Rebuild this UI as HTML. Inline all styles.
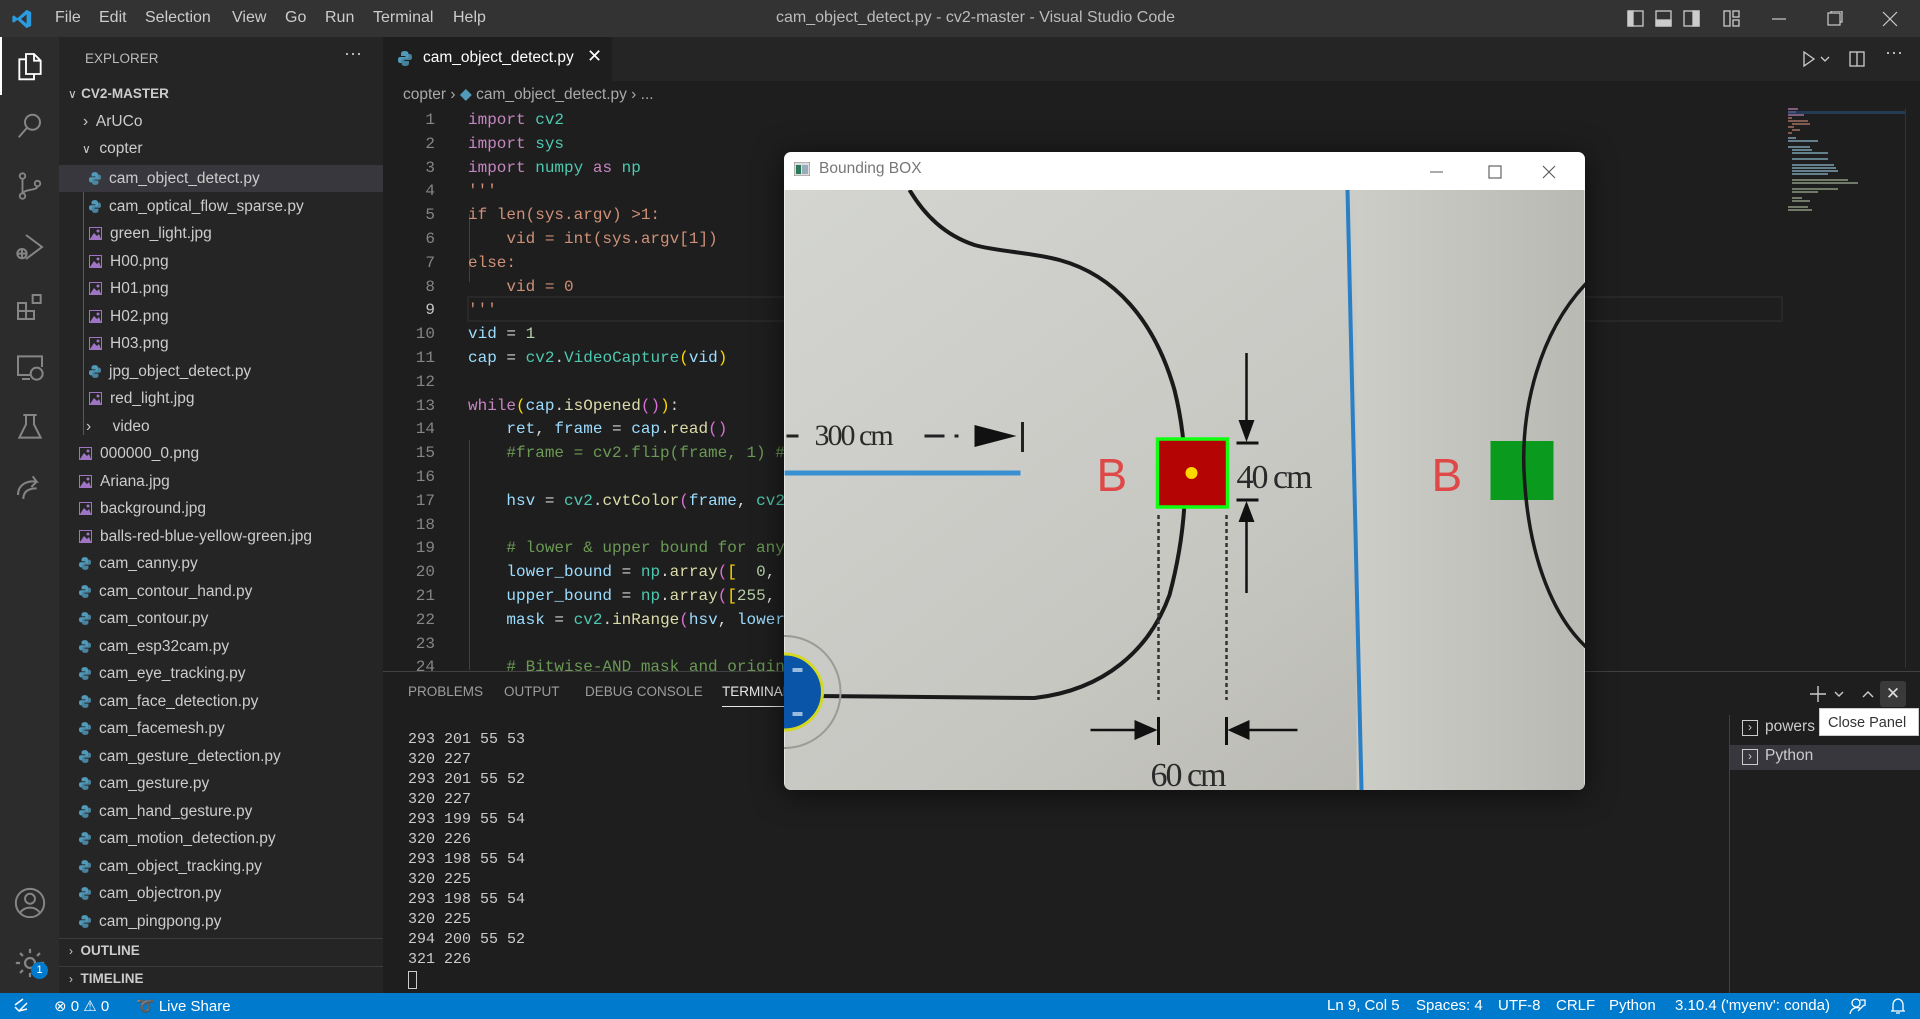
<!DOCTYPE html>
<html><head><meta charset="utf-8">
<style>
*{margin:0;padding:0;box-sizing:border-box}
body{width:1920px;height:1019px;overflow:hidden;background:#1e1e1e;font-family:"Liberation Sans",sans-serif;position:relative;color:#ccc}
.abs{position:absolute}
#title{left:0;top:0;width:1920px;height:37px;background:#333333}
.menu{top:9px;font-size:16px;color:#cccccc}
#act{left:0;top:37px;width:59px;height:956px;background:#2c2c2c}
#side{left:59px;top:37px;width:324px;height:956px;background:#252526}
.row{position:absolute;left:0;width:324px;height:27px;font-size:15.5px;color:#cccccc;line-height:27px;white-space:nowrap}
.ic{display:inline-block;vertical-align:middle;margin-right:8px}
#tabs{left:383px;top:37px;width:1537px;height:44px;background:#252526}
.code{position:absolute;font-family:"Liberation Mono",monospace;font-size:16px;white-space:pre;line-height:24px;height:24px}
.ln{position:absolute;width:50px;text-align:right;font-family:"Liberation Mono",monospace;font-size:16px;color:#858585;line-height:24px;left:385px}
.k{color:#c586c0}.t{color:#4ec9b0}.s{color:#ce9178}.v{color:#9cdcfe}.f{color:#dcdcaa}.n{color:#b5cea8}.c{color:#6a9955}.p{color:#d4d4d4}.y{color:#ffd700}.pk{color:#da70d6}
.term{position:absolute;left:408px;font-family:"Liberation Mono",monospace;font-size:15px;color:#cccccc;line-height:20px;white-space:pre}
.ptab{top:684px;font-size:13.5px;color:#9d9d9d}
#status{left:0;top:993px;width:1920px;height:26px;background:#007acc;color:#fff;font-size:15px}
.st{top:4px;color:#fff;font-size:15px;white-space:nowrap}
</style></head><body>

<div id="title" class="abs">
<svg class="abs" style="left:11px;top:8px" width="22" height="22" viewBox="0 0 24 24"><path d="M17 2 L22 4.5 V19.5 L17 22 L7 13 L3 16 L1.5 15 V9 L3 8 L7 11 Z M17 7 L11 12 L17 17 Z" fill="#2b9be0"/></svg>
<span class="abs menu" style="left:55px">File</span>
<span class="abs menu" style="left:99px">Edit</span>
<span class="abs menu" style="left:145px">Selection</span>
<span class="abs menu" style="left:232px">View</span>
<span class="abs menu" style="left:285px">Go</span>
<span class="abs menu" style="left:325px">Run</span>
<span class="abs menu" style="left:373px">Terminal</span>
<span class="abs menu" style="left:453px">Help</span>
<span class="abs menu" style="left:776px;color:#bbb">cam_object_detect.py - cv2-master - Visual Studio Code</span>
<svg class="abs" style="left:1627px;top:10px" width="118" height="18" viewBox="0 0 118 18" fill="none" stroke="#ccc" stroke-width="1.3">
<rect x="1" y="1" width="15" height="15"/><rect x="1" y="1" width="5" height="15" fill="#ccc"/>
<rect x="29" y="1" width="15" height="15"/><rect x="29" y="10" width="15" height="6" fill="#ccc"/>
<rect x="57" y="1" width="15" height="15"/><rect x="66" y="1" width="6" height="15" fill="#ccc"/>
<rect x="97" y="1" width="6" height="15"/><rect x="106" y="1" width="6" height="6"/><rect x="106" y="10" width="6" height="6"/>
</svg>
<svg class="abs" style="left:1771px;top:11px" width="130" height="16" fill="none" stroke="#ccc" stroke-width="1.2"><path d="M1 8 H15"/><rect x="57" y="2" width="12" height="12"/><path d="M60 2 V0 H71 V11 H69"/><path d="M112 1 L126 15 M126 1 L112 15"/></svg>
</div>

<div id="act" class="abs">
<div class="abs" style="left:0;top:0;width:2px;height:58px;background:#fff"></div>
<svg class="abs" style="left:14px;top:13px" width="32" height="32" viewBox="0 0 24 24" fill="none" stroke="#fff" stroke-width="1.4"><path d="M9 3 H15 L20 8 V18 H9 Z"/><path d="M15 3 V8 H20"/><path d="M9 7 H4 V22 H15 V18"/></svg>
<svg class="abs" style="left:15px;top:74px" width="30" height="30" viewBox="0 0 24 24" fill="none" stroke="#858585" stroke-width="1.6"><circle cx="14" cy="9" r="6"/><path d="M10 13 L3 21"/></svg>
<svg class="abs" style="left:15px;top:134px" width="30" height="30" viewBox="0 0 24 24" fill="none" stroke="#858585" stroke-width="1.5"><circle cx="6" cy="4" r="2.2"/><circle cx="6" cy="20" r="2.2"/><circle cx="18" cy="10" r="2.2"/><path d="M6 6 V18 M18 12 C18 16 8 14 6 18"/></svg>
<svg class="abs" style="left:14px;top:194px" width="32" height="32" viewBox="0 0 24 24" fill="none" stroke="#858585" stroke-width="1.5"><path d="M9 3 L21 12 L9 21"/><circle cx="6" cy="17" r="3.5"/><path d="M2 17 H10 M6 13 V21"/></svg>
<svg class="abs" style="left:14px;top:254px" width="32" height="32" viewBox="0 0 24 24" fill="none" stroke="#858585" stroke-width="1.5"><rect x="3" y="9" width="6" height="6"/><rect x="3" y="15" width="6" height="6"/><rect x="9" y="15" width="6" height="6"/><rect x="14" y="3" width="6" height="6"/></svg>
<svg class="abs" style="left:14px;top:314px" width="32" height="32" viewBox="0 0 24 24" fill="none" stroke="#858585" stroke-width="1.5"><path d="M12 18 H3 V4 H21 V12"/><path d="M6 21 H12"/><circle cx="17" cy="17" r="4.5"/></svg>
<svg class="abs" style="left:14px;top:374px" width="32" height="32" viewBox="0 0 24 24" fill="none" stroke="#858585" stroke-width="1.5"><path d="M9 3 V10 L4 20 H20 L15 10 V3 M7 3 H17"/></svg>
<svg class="abs" style="left:14px;top:434px" width="32" height="32" viewBox="0 0 24 24" fill="none" stroke="#858585" stroke-width="1.5"><path d="M3 18 C3 10 10 7 17 8 L14 4 M17 8 L13 12"/><path d="M7 21 C7 15 11 13 17 13"/></svg>
<svg class="abs" style="left:13px;top:849px" width="34" height="34" viewBox="0 0 24 24" fill="none" stroke="#858585" stroke-width="1.4"><circle cx="12" cy="12" r="10"/><circle cx="12" cy="9" r="3.5"/><path d="M5 19 C8 14 16 14 19 19"/></svg>
<svg class="abs" style="left:13px;top:909px" width="34" height="34" viewBox="0 0 24 24" fill="none" stroke="#858585" stroke-width="1.6"><circle cx="12" cy="12" r="3.5"/><path d="M12 2 V5 M12 19 V22 M2 12 H5 M19 12 H22 M5 5 L7 7 M17 17 L19 19 M5 19 L7 17 M17 7 L19 5"/></svg>
<div class="abs" style="left:31px;top:925px;width:17px;height:17px;border-radius:50%;background:#007acc;color:#fff;font-size:11px;text-align:center;line-height:17px">1</div>
</div>

<div id="side" class="abs">
<span class="abs" style="left:26px;top:14px;font-size:13.5px;color:#bbb">EXPLORER</span>
<span class="abs" style="left:285px;top:6px;font-size:18px;color:#ccc">···</span>
<div class="row" style="top:43px;left:0"><span style="margin-left:9px;color:#ccc;font-size:12px">&#x2228;</span> <b style="font-size:13.5px">CV2-MASTER</b></div>
<div class="abs" style="left:24px;top:138px;width:1px;height:260px;background:#585858"></div>
<div class="row" style="top:71px"><span style="margin-left:24px;color:#ccc">&#x203A;</span>&nbsp; ArUCo</div>
<div class="row" style="top:98px"><span style="margin-left:23px;color:#ccc;font-size:12px">&#x2228;</span>&nbsp; copter</div>
<div class="row" style="top:128px;background:#37373d"></div>
</div>

<div id="files"></div>

<div class="abs" style="left:59px;top:938px;width:324px;height:1px;background:#3c3c3c"></div>
<div class="abs" style="left:69px;top:943px;font-size:13.5px;color:#ccc"><span style="font-size:12px">&#x203A;</span>&nbsp; <b>OUTLINE</b></div>
<div class="abs" style="left:59px;top:966px;width:324px;height:1px;background:#3c3c3c"></div>
<div class="abs" style="left:69px;top:971px;font-size:13.5px;color:#ccc"><span style="font-size:12px">&#x203A;</span>&nbsp; <b>TIMELINE</b></div>

<div id="tabs" class="abs">
<div class="abs" style="left:0;top:0;width:229px;height:44px;background:#1e1e1e"></div>
<svg class="abs" style="left:15px;top:14px" width="14" height="15" viewBox="0 0 14 15"><path d="M7 0 C3 0 3 2 3 3 V5 H7.5 V6 H2 C0 6 0 8 0 9 C0 11 1 12 2 12 H3.5 V10 C3.5 8.5 4.5 7.5 6 7.5 H9 C10 7.5 10.5 7 10.5 6 V3 C10.5 1 9 0 7 0 Z" fill="#519aba"/><path d="M7 15 C11 15 11 13 11 12 V10 H6.5 V9 H12 C14 9 14 7 14 6 C14 4 13 3 12 3 H10.5 V5 C10.5 6.5 9.5 7.5 8 7.5 H5 C4 7.5 3.5 8 3.5 9 V12 C3.5 14 5 15 7 15 Z" fill="#519aba" opacity=".8"/></svg>
<span class="abs" style="left:40px;top:12px;font-size:15.5px;color:#fff">cam_object_detect.py</span>
<span class="abs" style="left:204px;top:9px;font-size:18px;color:#fff">&#x2715;</span>
<svg class="abs" style="left:1418px;top:13px" width="100" height="18" fill="none" stroke="#ccc" stroke-width="1.3"><path d="M3 2 L13 9 L3 16 Z"/><path d="M20 7 L24 11 L28 7"/><rect x="49" y="2" width="14" height="14"/><path d="M56 2 V16"/></svg>
<span class="abs" style="left:1502px;top:5px;font-size:18px;color:#ccc">···</span>
</div>

<div class="abs" style="left:403px;top:85px;font-size:15.5px;color:#a9a9a9;white-space:nowrap">copter &#x203A; <span style="color:#519aba">&#x25C6;</span> cam_object_detect.py &#x203A; ...</div>

<div class="abs" style="left:467px;top:296px;width:1316px;height:26px;border:2px solid #282828"></div>
<div class="abs" style="left:469px;top:214px;width:1px;height:68px;background:#404040"></div>
<div class="abs" style="left:469px;top:440px;width:1px;height:230px;background:#404040"></div>

<div id="code"></div>

<svg class="abs" style="left:1788px;top:108px" width="117" height="105">
<g stroke-width="1.5">
<path d="M0 1 H10 M0 4 H8 M0 7 H16" stroke="#a070a0"/>
<path d="M0 10 H4 M0 13 H20 M4 16 H22 M0 19 H6 M4 22 H12 M0 25 H4" stroke="#a07060"/>
<path d="M0 30 H8 M0 33 H30 M0 39 H22 M4 42 H24 M4 45 H40 M4 51 H40 M4 57 H46 M4 60 H48 M4 63 H50 M4 66 H40" stroke="#7aa0b0"/>
<path d="M4 72 H60 M4 75 H70 M4 81 H50 M4 84 H30 M4 90 H14 M4 93 H22 M0 99 H20 M0 102 H24" stroke="#8a9a80"/>
</g>
<rect x="0" y="3" width="117" height="3" fill="#264f78" opacity=".6"/>
</svg>
<div class="abs" style="left:1905px;top:108px;width:1px;height:560px;background:#333"></div>

<div class="abs" style="left:383px;top:671px;width:1537px;height:322px;background:#1e1e1e;border-top:1px solid #414141"></div>
<span class="abs ptab" style="left:408px">PROBLEMS</span>
<span class="abs ptab" style="left:504px">OUTPUT</span>
<span class="abs ptab" style="left:585px">DEBUG CONSOLE</span>
<span class="abs ptab" style="left:722px;color:#e7e7e7">TERMINAL</span>
<div class="abs" style="left:722px;top:706px;width:70px;height:1px;background:#e7e7e7"></div>
<div id="term"></div>
<div class="abs" style="left:1729px;top:715px;width:1px;height:278px;background:#414141"></div>
<div class="abs" style="left:1730px;top:745px;width:190px;height:25px;background:#37373d"></div>
<div class="abs" style="left:1742px;top:720px;width:16px;height:16px;border:1.3px solid #ccc;font-size:12px;line-height:12px;text-align:center;color:#ccc">&#x203A;</div>
<span class="abs" style="left:1765px;top:718px;font-size:15.5px;color:#ccc">powers</span>
<div class="abs" style="left:1742px;top:749px;width:16px;height:16px;border:1.3px solid #ccc;font-size:12px;line-height:12px;text-align:center;color:#ccc">&#x203A;</div>
<span class="abs" style="left:1765px;top:747px;font-size:15.5px;color:#ccc">Python</span>
<svg class="abs" style="left:1808px;top:684px" width="112" height="20" fill="none" stroke="#ccc" stroke-width="1.4"><path d="M10 2 V18 M2 10 H18"/><path d="M27 8 L31 12 L35 8"/><path d="M55 13 L60 8 L65 13"/></svg>
<div class="abs" style="left:1880px;top:681px;width:26px;height:26px;background:#3a3a3a;border-radius:3px;color:#ddd;text-align:center;font-size:17px;line-height:26px">&#x2715;</div>
<div class="abs" style="left:1819px;top:708px;width:100px;height:28px;background:#fff;color:#333;font-size:14.5px;line-height:28px;padding-left:8px;border:1px solid #ccc">Close Panel</div>

<div class="abs" style="left:784px;top:152px;width:801px;height:638px;background:#fff;border-radius:7px;overflow:hidden;box-shadow:0 4px 30px rgba(0,0,0,.6)">
<svg class="abs" style="left:10px;top:10px" width="16" height="14"><rect x="0" y="0" width="16" height="14" fill="#ddd" stroke="#888"/><rect x="2" y="3" width="5" height="9" fill="#2a7a5a"/><rect x="8" y="3" width="6" height="9" fill="#9ab"/></svg>
<span class="abs" style="left:35px;top:8px;font-size:15.5px;color:#777">Bounding BOX</span>
<svg class="abs" style="left:645px;top:12px" width="145" height="16" fill="none" stroke="#555" stroke-width="1.1"><path d="M1 8 H14"/><rect x="60" y="2" width="12" height="12"/><path d="M114 2 L126 14 M126 2 L114 14"/></svg>
<svg class="abs" style="left:0;top:38px" width="801" height="600" viewBox="0 0 800 600">
<defs>
<linearGradient id="bg" x1="0" y1="0" x2="1" y2="1"><stop offset="0" stop-color="#d4d5d1"/><stop offset=".6" stop-color="#c6c6c1"/><stop offset="1" stop-color="#b4b3ad"/></linearGradient>
<linearGradient id="bg2" x1="0" y1="0" x2="1" y2="0"><stop offset="0" stop-color="#cdcdc8"/><stop offset="1" stop-color="#b9b9b4"/></linearGradient>
</defs>
<rect width="800" height="600" fill="url(#bg)"/>
<rect x="572" width="228" height="600" fill="url(#bg2)"/>
<path d="M125 0 C140 25 160 45 190 55 C215 62 245 62 275 70 C330 85 370 130 390 200 C405 260 405 330 385 405 C365 460 320 500 250 508 L30 506" fill="none" stroke="#1a1a1a" stroke-width="4"/>
<path d="M563 0 L577 600" stroke="#2b7fc4" stroke-width="4"/>
<path d="M0 283 H236" stroke="#3a8fd0" stroke-width="5"/>
<text x="30" y="255" font-family="Liberation Serif,serif" font-size="30" fill="#2a2a2a" letter-spacing="-2">300 cm</text>
<path d="M2 246 H14 M140 246 H160 M170 246 H174" stroke="#222" stroke-width="3"/>
<path d="M190 235 L232 246 L190 257 Z" fill="#111"/><path d="M238 232 V262" stroke="#222" stroke-width="3"/>
<text x="312" y="301" font-family="Liberation Sans,sans-serif" font-size="46" fill="#e04848">B</text>
<rect x="373" y="249" width="70" height="68" fill="#b40404" stroke="#10ff10" stroke-width="3.5"/>
<circle cx="407" cy="283" r="6" fill="#ffd800"/>
<path d="M462 163 V240" stroke="#111" stroke-width="2.5"/><path d="M454 230 L462 252 L470 230 Z" fill="#111"/><path d="M452 253 H474" stroke="#111" stroke-width="3"/>
<path d="M452 310 H474" stroke="#111" stroke-width="3"/><path d="M454 332 L462 311 L470 332 Z" fill="#111"/><path d="M462 320 V403" stroke="#111" stroke-width="2.5"/>
<text x="452" y="298" font-family="Liberation Serif,serif" font-size="34" fill="#2a2a2a" letter-spacing="-2">40 cm</text>
<path d="M374 325 V510 M442 325 V510" stroke="#333" stroke-width="2.5" stroke-dasharray="4 3"/>
<path d="M306 540 H350 M513 540 H465" stroke="#111" stroke-width="2.5"/>
<path d="M350 530 L373 540 L350 550 Z M465 530 L443 540 L465 550 Z" fill="#111"/>
<path d="M374 527 V555 M442 527 V555" stroke="#111" stroke-width="3"/>
<text x="366" y="596" font-family="Liberation Serif,serif" font-size="34" fill="#2a2a2a" letter-spacing="-2">60 cm</text>
<text x="647" y="301" font-family="Liberation Sans,sans-serif" font-size="46" fill="#e04848">B</text>
<rect x="706" y="251" width="63" height="59" fill="#0a9a1e"/>
<path d="M805 90 C755 140 735 220 740 290 C745 370 770 430 805 460" fill="none" stroke="#1a1a1a" stroke-width="3.5"/>
<circle cx="0" cy="502" r="56" fill="none" stroke="#9a9a98" stroke-width="2"/>
<circle cx="0" cy="502" r="38" fill="#0a55a8" stroke="#d4d820" stroke-width="3"/>
<rect x="8" y="478" width="10" height="4" fill="#9bd"/><rect x="8" y="522" width="10" height="4" fill="#9bd"/>
</svg>
</div>

<div id="status" class="abs">
<svg class="abs" style="left:13px;top:5px" width="16" height="16" fill="none" stroke="#fff" stroke-width="1.5"><path d="M2 9 L6 13 L14 5 M2 7 L10 1 M6 13 L14 11"/></svg>
<span class="abs st" style="left:54px">&#x2297; 0 &#x26A0; 0</span>
<span class="abs st" style="left:136px">&#x27B0; Live Share</span>
<span class="abs st" style="left:1327px">Ln 9, Col 5</span>
<span class="abs st" style="left:1416px">Spaces: 4</span>
<span class="abs st" style="left:1498px">UTF-8</span>
<span class="abs st" style="left:1556px">CRLF</span>
<span class="abs st" style="left:1609px">Python</span>
<span class="abs st" style="left:1675px">3.10.4 ('myenv': conda)</span>
<svg class="abs" style="left:1848px;top:4px" width="64" height="18" fill="none" stroke="#fff" stroke-width="1.3"><circle cx="8" cy="6" r="4"/><path d="M2 17 C3 11 8 10 12 11 M10 14 L16 8 M12 3 H17 V9"/><path d="M45 14 V8 C45 4 48 2 50 2 C52 2 55 4 55 8 V14 H43 H57 M48 16 H52"/></svg>
</div>

<script>
var files=[
["cam_object_detect.py","py",89],["cam_optical_flow_sparse.py","py",89],["green_light.jpg","img",89],["H00.png","img",89],["H01.png","img",89],["H02.png","img",89],["H03.png","img",89],["jpg_object_detect.py","py",89],["red_light.jpg","img",89],
["video","dir",86],["000000_0.png","img",79],["Ariana.jpg","img",79],["background.jpg","img",79],["balls-red-blue-yellow-green.jpg","img",79],["cam_canny.py","py",79],["cam_contour_hand.py","py",79],["cam_contour.py","py",79],["cam_esp32cam.py","py",79],["cam_eye_tracking.py","py",79],["cam_face_detection.py","py",79],["cam_facemesh.py","py",79],["cam_gesture_detection.py","py",79],["cam_gesture.py","py",79],["cam_hand_gesture.py","py",79],["cam_motion_detection.py","py",79],["cam_object_tracking.py","py",79],["cam_objectron.py","py",79],["cam_pingpong.py","py",79]];
var pyIcon='<svg class="ic" width="12" height="13" viewBox="0 0 14 15"><path d="M7 0C3 0 3 2 3 3V5H7.5V6H2C0 6 0 8 0 9C0 11 1 12 2 12H3.5V10C3.5 8.5 4.5 7.5 6 7.5H9C10 7.5 10.5 7 10.5 6V3C10.5 1 9 0 7 0Z" fill="#519aba"/><path d="M7 15C11 15 11 13 11 12V10H6.5V9H12C14 9 14 7 14 6C14 4 13 3 12 3H10.5V5C10.5 6.5 9.5 7.5 8 7.5H5C4 7.5 3.5 8 3.5 9V12C3.5 14 5 15 7 15Z" fill="#519aba" opacity=".8"/></svg>';
var imgIcon='<svg class="ic" width="13" height="13" viewBox="0 0 13 13"><rect x="0.5" y="0.5" width="12" height="12" fill="none" stroke="#a074c4"/><path d="M1 12 L5 6 L8 9 L10 7 L12 12Z" fill="#a074c4"/><circle cx="9" cy="4" r="1.5" fill="#a074c4"/></svg>';
var h='';
files.forEach(function(f,i){
 var top=165+i*27.5;
 var inner=f[1]=='dir'?'<span style="color:#ccc;display:inline-block;width:18px">&#x203A;</span>&nbsp; '+f[0]:(f[1]=='py'?pyIcon:imgIcon)+f[0];
 h+='<div class="row" style="left:'+f[2]+'px;top:'+top+'px;width:auto">'+inner+'</div>';
});
document.getElementById('files').innerHTML=h;

var code=[
'<span class="k">import</span> <span class="t">cv2</span>',
'<span class="k">import</span> <span class="t">sys</span>',
'<span class="k">import</span> <span class="t">numpy</span> <span class="k">as</span> <span class="t">np</span>',
"<span class=\"s\">'''</span>",
'<span class="s">if len(sys.argv) >1:</span>',
'<span class="s">    vid = int(sys.argv[1])</span>',
'<span class="s">else:</span>',
'<span class="s">    vid = 0</span>',
"<span class=\"s\">'''</span>",
'<span class="v">vid</span> <span class="p">=</span> <span class="n">1</span>',
'<span class="v">cap</span> <span class="p">=</span> <span class="t">cv2</span><span class="p">.</span><span class="t">VideoCapture</span><span class="y">(</span><span class="v">vid</span><span class="y">)</span>',
'',
'<span class="k">while</span><span class="y">(</span><span class="v">cap</span><span class="p">.</span><span class="f">isOpened</span><span class="pk">()</span><span class="y">)</span><span class="p">:</span>',
'    <span class="v">ret</span><span class="p">, </span><span class="v">frame</span> <span class="p">=</span> <span class="v">cap</span><span class="p">.</span><span class="f">read</span><span class="pk">()</span>',
'    <span class="c">#frame = cv2.flip(frame, 1) # flip</span>',
'',
'    <span class="v">hsv</span> <span class="p">=</span> <span class="t">cv2</span><span class="p">.</span><span class="f">cvtColor</span><span class="pk">(</span><span class="v">frame</span><span class="p">, </span><span class="t">cv2</span>',
'',
'    <span class="c"># lower &amp; upper bound for any color</span>',
'    <span class="v">lower_bound</span> <span class="p">=</span> <span class="t">np</span><span class="p">.</span><span class="f">array</span><span class="pk">(</span><span class="y">[</span>  <span class="n">0</span><span class="p">, </span>',
'    <span class="v">upper_bound</span> <span class="p">=</span> <span class="t">np</span><span class="p">.</span><span class="f">array</span><span class="pk">(</span><span class="y">[</span><span class="n">255</span><span class="p">, </span>',
'    <span class="v">mask</span> <span class="p">=</span> <span class="t">cv2</span><span class="p">.</span><span class="f">inRange</span><span class="pk">(</span><span class="v">hsv</span><span class="p">, </span><span class="v">lower</span>',
'',
'    <span class="c"># Bitwise-AND mask and original</span>'];
var c='';
code.forEach(function(l,i){
 var top=108+i*23.8;
 c+='<div class="ln" style="top:'+top+'px;'+(i==8?'color:#c6c6c6':'')+'">'+(i+1)+'</div>';
 c+='<div class="code" style="left:468px;top:'+top+'px">'+l+'</div>';
});
document.getElementById('code').innerHTML='<div style="position:absolute;left:0;top:0;width:1920px;height:671px;overflow:hidden">'+c+'</div>';

var t=["293 201 55 53","320 227","293 201 55 52","320 227","293 199 55 54","320 226","293 198 55 54","320 225","293 198 55 54","320 225","294 200 55 52","321 226"];
var th='';
t.forEach(function(l,i){th+='<div class="term" style="top:'+(730+i*20)+'px">'+l+'</div>';});
th+='<div class="abs" style="left:408px;top:971px;width:9px;height:18px;border:1px solid #ccc"></div>';
document.getElementById('term').innerHTML=th;
</script>
</body></html>
